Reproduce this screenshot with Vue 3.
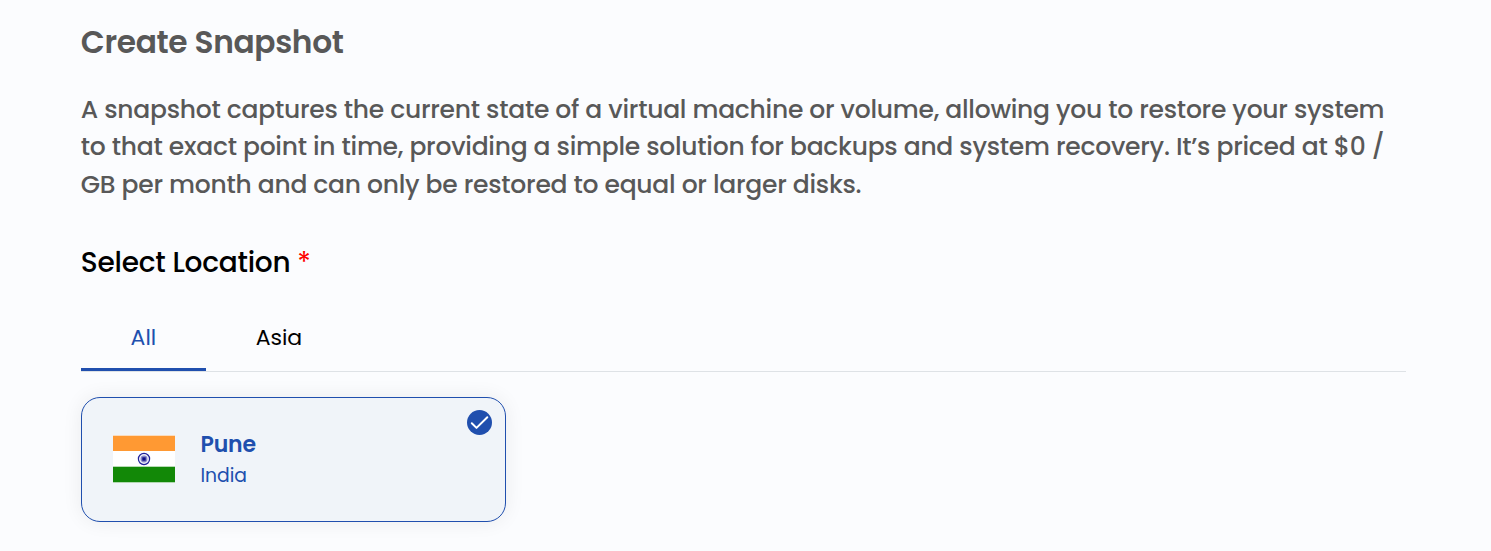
<script setup>
import { ref } from 'vue'

const description = [
  'A snapshot captures the current state of a virtual machine or volume, allowing you to restore your system',
  'to that exact point in time, providing a simple solution for backups and system recovery. It’s priced at $0 /',
  'GB per month and can only be restored to equal or larger disks.',
]
const tabs = ['All', 'Asia']
const active = ref('All')
</script>

<template>
  <main class="page">
    <h1>Create Snapshot</h1>
    <p class="description">
      <span v-for="(line, i) in description" :key="i">{{ line }}</span>
    </p>
    <h2>Select Location <span class="required">*</span></h2>
    <nav class="tabs">
      <button v-for="tab in tabs" :key="tab" :class="{ active: tab === active }" @click="active = tab">{{ tab }}</button>
    </nav>
    <section class="card">
      <svg class="flag" width="62" height="48" viewBox="0 0 62 48">
        <rect y="0.5" width="62" height="47" fill="#fff" />
        <rect y="0.7" width="62" height="15.3" fill="#ff9933" />
        <rect y="31.7" width="62" height="15.6" fill="#128807" />
        <circle cx="31" cy="24" r="5.6" fill="#eeeef8" stroke="#20209a" stroke-width="1.2" />
        <circle cx="31" cy="24" r="3.4" fill="#8585c6" />
        <rect x="29.3" y="22.3" width="3.4" height="3.4" fill="#111188" />
      </svg>
      <div class="place">
        <strong>Pune</strong>
        <span>India</span>
      </div>
      <svg class="check" width="25" height="25" viewBox="0 0 25 25">
        <circle cx="12.5" cy="12.5" r="12.5" fill="#204fae" />
        <path d="M4.8 13.3 9.5 17.9 20.3 7.3" fill="none" stroke="#fff" stroke-width="2" stroke-linecap="round" stroke-linejoin="round" />
      </svg>
    </section>
  </main>
</template>

<style>
body { background: #fbfcfe; }
</style>

<style scoped>
.page {
  box-sizing: border-box;
  width: 1491px;
  height: 551px;
  padding: 23px 85.5px 0 80.8px;
  overflow: hidden;
  background: #fbfcfe;
  font-family: Poppins, Inter, "Liberation Sans", sans-serif;
  color: #585858;
}
h1, h2, p { margin: 0; }
h1 { font-size: 31.25px; line-height: 38px; font-weight: 600; letter-spacing: -0.33px; white-space: nowrap; }
.description { margin-top: 29.6px; font-size: 25px; line-height: 37.5px; font-weight: 500; letter-spacing: -0.253px; white-space: nowrap; }
.description span { display: block; width: max-content; }
h2 { margin-top: 40.9px; font-size: 28px; line-height: 38px; font-weight: 500; letter-spacing: -0.25px; color: #000; white-space: nowrap; }
.required { color: #f00; font-weight: 400; }
.tabs { display: flex; box-sizing: border-box; height: 90px; padding-top: 28px; border-bottom: 1px solid #dee2e6; }
button {
  box-sizing: border-box;
  height: 61px;
  padding: 0 49.8px 3px;
  border: 0;
  border-bottom: 3px solid transparent;
  background: none;
  font: inherit;
  font-size: 22px;
  letter-spacing: -0.04px;
  color: #000;
}
button.active { color: #204fae; border-color: #204fae; }
.card {
  position: relative;
  display: flex;
  align-items: center;
  box-sizing: border-box;
  width: 425px;
  height: 125px;
  margin-top: 25px;
  padding-left: 31px;
  border: 1px solid #204fae;
  border-radius: 19px;
  background: #f0f4f9;
  box-shadow: 0 0 20px rgba(0, 0, 0, 0.07);
}
.flag { margin-left: 0.2px; }
.place { display: flex; flex-direction: column; margin: 2px 0 0 25.4px; color: #204fae; }
.place strong { font-size: 22px; line-height: 32px; font-weight: 600; letter-spacing: -0.1px; }
.place span { font-size: 18.75px; line-height: 30px; }
.check { position: absolute; top: 12px; right: 12.8px; }
</style>
